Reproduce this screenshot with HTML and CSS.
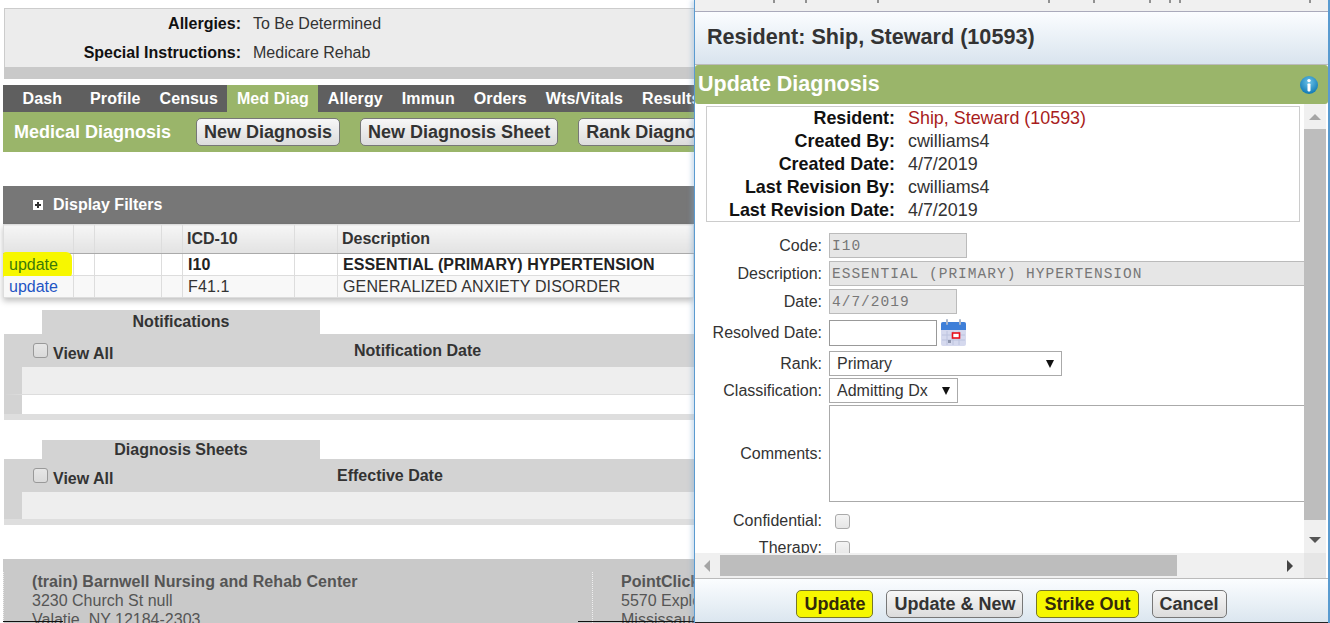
FILE: index.html
```html
<!doctype html>
<html lang="en">

<head>
  <meta charset="UTF-8" />
  <title>Medical Diagnosis</title>
  <link rel="stylesheet" href="styles.css">
</head>

<body>
  <div class="page">
    <div class="info-panel">
      <div class="info-row"><strong>Allergies:</strong><span>To Be Determined</span></div>
      <div class="info-row"><strong>Special Instructions:</strong><span>Medicare Rehab</span></div>
    </div>
    <div class="info-band"></div>

    <div class="tabs">
      <a class="tab tab-first">Dash</a>
      <a class="tab">Profile</a>
      <a class="tab">Census</a>
      <a class="tab active">Med Diag</a>
      <a class="tab">Allergy</a>
      <a class="tab">Immun</a>
      <a class="tab">Orders</a>
      <a class="tab">Wts/Vitals</a>
      <a class="tab">Results</a>
    </div>
    <div class="toolbar">
      <span class="toolbar-title">Medical Diagnosis</span>
      <button class="btn">New Diagnosis</button>
      <button class="btn">New Diagnosis Sheet</button>
      <button class="btn">Rank Diagnosis</button>
    </div>

    <div class="filters">
      <span class="plus-box"></span>
      <span>Display Filters</span>
    </div>
    <table class="diag-table">
      <colgroup>
        <col class="col-a" />
        <col class="col-b" />
        <col class="col-c" />
        <col class="col-d" />
        <col class="col-e" />
        <col class="col-f" />
        <col />
      </colgroup>
      <thead>
        <tr>
          <th></th>
          <th></th>
          <th></th>
          <th></th>
          <th>ICD-10</th>
          <th></th>
          <th>Description</th>
        </tr>
      </thead>
      <tbody>
        <tr class="strong-row">
          <td class="link-cell"><span class="marker"></span><a class="link link-marked">update</a></td>
          <td></td>
          <td></td>
          <td></td>
          <td>I10</td>
          <td></td>
          <td>ESSENTIAL (PRIMARY) HYPERTENSION</td>
        </tr>
        <tr class="alt-row">
          <td class="link-cell"><a class="link">update</a></td>
          <td></td>
          <td></td>
          <td></td>
          <td>F41.1</td>
          <td></td>
          <td>GENERALIZED ANXIETY DISORDER</td>
        </tr>
      </tbody>
    </table>

    <section class="block block-notes">
      <div class="block-tab">Notifications</div>
      <div class="block-head">
        <label class="view-all"><span class="check check-dim"></span>View All</label>
        <strong class="head-date">Notification Date</strong>
      </div>
      <div class="block-row"></div>
      <div class="block-blank"></div>
      <div class="block-foot"></div>
    </section>

    <section class="block block-sheets">
      <div class="block-tab">Diagnosis Sheets</div>
      <div class="block-head">
        <label class="view-all"><span class="check check-dim"></span>View All</label>
        <strong class="head-date head-date-sheets">Effective Date</strong>
      </div>
      <div class="block-row"></div>
      <div class="block-foot"></div>
    </section>

    <footer class="footer">
      <div class="footer-col footer-left">
        <strong>(train) Barnwell Nursing and Rehab Center</strong>
        <span>3230 Church St null</span>
        <span>Valatie, NY 12184-2303</span>
      </div>
      <div class="footer-col footer-right">
        <strong>PointClickCare</strong>
        <span>5570 Explorer Drive</span>
        <span>Mississauga</span>
      </div>
      <span class="edge-line edge-line-left"></span>
      <span class="edge-line edge-line-right"></span>
    </footer>
  </div>

  <div class="dialog">
    <div class="dialog-strip">
      <svg class="strip-ticks" width="634" height="4">
        <path d="M79 0v3M111 0v3M183 0v3M354 0v3M399 0v3M455 0v3M475 0v3M485 0v3M615 0v3" stroke="#333" fill="none" />
      </svg>
    </div>
    <div class="dialog-head">Resident: Ship, Steward (10593)</div>
    <div class="dialog-bar">
      <span>Update Diagnosis</span>
      <svg class="info-icon" width="20" height="20" viewBox="0 0 20 20">
        <defs>
          <radialGradient id="infoFill" cx="50%" cy="35%" r="65%">
            <stop offset="0" stop-color="#6cc4ea" />
            <stop offset="1" stop-color="#0f78b4" />
          </radialGradient>
        </defs>
        <circle cx="10" cy="10" r="9" fill="url(#infoFill)" />
        <circle cx="10" cy="5.6" r="1.7" fill="#fff" />
        <rect x="8.5" y="8.4" width="3" height="8" rx="0.8" fill="#fff" />
      </svg>
    </div>

    <div class="dialog-body">
      <div class="dialog-scroll">
        <div class="summary">
          <div class="summary-row"><strong>Resident:</strong><span class="resident">Ship, Steward (10593)</span></div>
          <div class="summary-row"><strong>Created By:</strong><span>cwilliams4</span></div>
          <div class="summary-row"><strong>Created Date:</strong><span>4/7/2019</span></div>
          <div class="summary-row"><strong>Last Revision By:</strong><span>cwilliams4</span></div>
          <div class="summary-row"><strong>Last Revision Date:</strong><span>4/7/2019</span></div>
        </div>

        <div class="form">
          <div class="form-row">
            <label>Code:</label>
            <input class="field field-code" disabled value="I10" />
          </div>
          <div class="form-row">
            <label>Description:</label>
            <input class="field field-desc" disabled value="ESSENTIAL (PRIMARY) HYPERTENSION" />
          </div>
          <div class="form-row">
            <label>Date:</label>
            <input class="field field-date" disabled value="4/7/2019" />
          </div>
          <div class="form-row form-row-resolved">
            <label>Resolved Date:</label>
            <input class="field field-resolved" />
            <svg class="cal-icon" width="27" height="28" viewBox="0 0 27 28">
              <rect x="1" y="3" width="25" height="24" rx="2" fill="#d5d9ee" />
              <path d="M1 5a2 2 0 0 1 2-2h21a2 2 0 0 1 2 2v6H1z" fill="#3f7fd8" />
              <rect x="6" y="0" width="2" height="6" rx="1" fill="#a9b4c8" />
              <rect x="19" y="0" width="2" height="6" rx="1" fill="#a9b4c8" />
              <path d="M2 16h23M2 21h23M7 12v14M13 12v14M19 12v14" stroke="#bcc3de" fill="none" />
              <rect x="12.5" y="14" width="7" height="5" fill="#fff" stroke="#e8101c" stroke-width="1.6" />
              <rect x="8" y="21" width="3" height="3" fill="#8e95ad" />
            </svg>
          </div>
          <div class="form-row form-row-rank">
            <label>Rank:</label>
            <div class="select select-rank"><span>Primary</span><span class="caret"></span></div>
          </div>
          <div class="form-row form-row-tight">
            <label>Classification:</label>
            <div class="select select-class"><span>Admitting Dx</span><span class="caret"></span></div>
          </div>
          <div class="form-row form-row-tight">
            <label>Comments:</label>
            <textarea class="comments"></textarea>
          </div>
          <div class="form-row form-row-check">
            <label>Confidential:</label>
            <span class="check"></span>
          </div>
          <div class="form-row form-row-check form-row-therapy">
            <label>Therapy:</label>
            <span class="check"></span>
          </div>
        </div>
      </div>

      <div class="vscroll">
        <span class="arrow arrow-up"></span>
        <div class="vthumb"></div>
        <span class="arrow arrow-down"></span>
      </div>
      <div class="hscroll">
        <span class="arrow arrow-left"></span>
        <div class="hthumb"></div>
        <span class="arrow arrow-right"></span>
      </div>
      <div class="scroll-corner"></div>
    </div>

    <div class="dialog-foot">
      <button class="btn btn-marked">Update</button>
      <button class="btn">Update &amp; New</button>
      <button class="btn btn-marked">Strike Out</button>
      <button class="btn">Cancel</button>
    </div>
  </div>
</body>

</html>
```

FILE: styles.css
```css
html,
body {
  margin: 0;
  height: 623px;
  overflow: hidden;
  background-color: #fff;
}

body {
  font-family: "Liberation Sans", Arial, sans-serif;
  font-size: 16px;
  color: #333;
}

.page {
  width: 694px;
  padding: 8px 0 0 3px;
  box-sizing: border-box;
}

/* top info panel */
.info-panel {
  margin-left: 1px;
  height: 59px;
  box-sizing: border-box;
  background-color: #ececec;
  border-top: 1px solid #ccc;
  border-left: 1px solid #ccc;
}

.info-row {
  display: flex;
  height: 29px;
  align-items: center;
}

.info-row strong {
  width: 236px;
  text-align: right;
  color: #111;
}

.info-row span {
  margin-left: 12px;
}

.info-band {
  margin-left: 1px;
  height: 12px;
  background-color: #c9c9c9;
}

/* tabs */
.tabs {
  display: flex;
  margin-top: 6px;
  height: 27px;
  background-color: #5f5f5f;
  overflow: hidden;
}

.tab {
  padding: 0 9.5px;
  line-height: 27px;
  font-weight: bold;
  letter-spacing: 0.1px;
  color: #fff;
  white-space: nowrap;
}

.tab-first {
  margin-left: 10px;
  margin-right: 9px;
}

.tab.active {
  background-color: #9ab56a;
}

.toolbar {
  display: flex;
  align-items: center;
  height: 40px;
  background-color: #9ab56a;
  overflow: hidden;
}

.toolbar-title {
  margin-left: 11px;
  margin-right: 25px;
  font-size: 18px;
  font-weight: bold;
  color: #fff;
  white-space: nowrap;
}

.btn {
  flex: none;
  height: 28px;
  padding: 0 7px;
  border: 1px solid #777;
  border-radius: 5px;
  background: linear-gradient(#f7f7f7, #dcdcdc);
  font-family: inherit;
  font-size: 18px;
  font-weight: bold;
  color: #333;
}

.toolbar .btn {
  margin-right: 20px;
}

/* filters and table */
.filters {
  display: flex;
  align-items: center;
  gap: 10px;
  margin-top: 34px;
  height: 38px;
  padding-left: 30px;
  background-color: #777;
  font-weight: bold;
  color: #fff;
}

.plus-box {
  position: relative;
  width: 10px;
  height: 10px;
  background-color: #fff;
}

.plus-box::before {
  content: "";
  position: absolute;
  left: 2px;
  top: 4px;
  width: 6px;
  height: 2px;
  background-color: #333;
}

.plus-box::after {
  content: "";
  position: absolute;
  left: 4px;
  top: 2px;
  width: 2px;
  height: 6px;
  background-color: #333;
}

.diag-table {
  width: 691px;
  table-layout: fixed;
  border-collapse: collapse;
  box-shadow: 0 3px 6px rgba(0, 0, 0, 0.25);
}

.col-a {
  width: 70px;
}

.col-b {
  width: 21px;
}

.col-c {
  width: 67px;
}

.col-d {
  width: 21px;
}

.col-e {
  width: 112px;
}

.col-f {
  width: 43px;
}

.diag-table th,
.diag-table td {
  padding: 0 0 0 4px;
  border: 1px solid #ddd;
  text-align: left;
  white-space: nowrap;
  overflow: hidden;
}

.diag-table th {
  height: 28px;
  background: linear-gradient(#f6f6f6, #e2e2e2);
  border-bottom: 1px solid #aaa;
  font-weight: bold;
}

.diag-table td {
  height: 21px;
  padding-left: 5px;
}

.strong-row td {
  font-weight: bold;
  color: #222;
  letter-spacing: 0.1px;
}

.alt-row td {
  background-color: #f8f8f8;
  letter-spacing: 0.14px;
}

.diag-table .link-cell {
  position: relative;
  overflow: visible;
  font-weight: normal;
  letter-spacing: 0;
}

.link {
  position: relative;
  color: #1f55c4;
}

.link-marked {
  color: #3c7a08;
}

.marker {
  position: absolute;
  left: -1px;
  top: -2px;
  width: 69px;
  height: 26px;
  background-color: #f7f700;
  border-radius: 3px 6px 5px 3px;
}

/* notification blocks */
.block {
  position: relative;
  margin-left: 1px;
}

.block-notes {
  margin-top: 12px;
}

.block-sheets {
  margin-top: 20px;
}

.block-tab {
  margin-left: 38px;
  width: 278px;
  height: 24px;
  background-color: #d3d3d3;
  font-weight: bold;
  line-height: 23px;
  text-align: center;
}

.block-sheets .block-tab {
  height: 19px;
  line-height: 19px;
}

.block-head {
  position: relative;
  height: 33px;
  background-color: #d3d3d3;
}

.view-all {
  position: absolute;
  left: 29px;
  top: 9px;
  display: flex;
  align-items: flex-start;
  gap: 5px;
  font-weight: bold;
  line-height: 22px;
}

.head-date {
  position: absolute;
  left: 350px;
  top: 8px;
}

.head-date-sheets {
  left: 333px;
}

.block-row {
  height: 27px;
  border-left: 18px solid #d3d3d3;
  background-color: #eee;
}

.block-blank {
  height: 19px;
  border-top: 1px solid #ddd;
  border-left: 18px solid #d3d3d3;
  background-color: #fff;
}

.block-foot {
  height: 6px;
  background-color: #dedede;
}

/* checkbox */
.check {
  display: inline-block;
  flex: none;
  width: 13px;
  height: 13px;
  border: 1px solid #aaa;
  border-radius: 3px;
  background: linear-gradient(#f4f4f4, #e6e6e6);
}

.check-dim {
  border-color: #999;
  background: linear-gradient(#e6e6e6, #dadada);
}

/* footer */
.footer {
  position: relative;
  display: flex;
  margin-top: 34px;
  height: 64px;
  padding-top: 13px;
  box-sizing: border-box;
  background-color: #c9c9c9;
  color: #555;
  overflow: hidden;
}

.footer-col {
  display: flex;
  flex: none;
  flex-direction: column;
  line-height: 19px;
  white-space: nowrap;
}

.footer-left {
  width: 589px;
  padding-left: 28px;
  box-sizing: border-box;
  border-left: 1px dotted #eee;
}

.footer-left strong {
  letter-spacing: 0.07px;
}

.footer-right {
  padding-left: 28px;
  border-left: 1px dotted #eee;
}

.edge-line {
  position: absolute;
  bottom: 1px;
  height: 1px;
  background-color: #111;
}

.edge-line-left {
  left: 0;
  width: 60px;
}

.edge-line-right {
  left: 575px;
  width: 116px;
}

/* dialog */
.dialog {
  position: absolute;
  left: 694px;
  top: 0;
  width: 636px;
  height: 623px;
  box-sizing: border-box;
  display: flex;
  flex-direction: column;
  background-color: #fff;
  border-left: 1px solid #5a9bd0;
  border-right: 2px solid #5a9bd0;
  box-shadow: -3px 0 4px rgba(130, 170, 210, 0.35);
}

.dialog-strip {
  height: 11px;
  background-color: #f0f0f0;
  border-bottom: 1px solid #aab;
}

.strip-ticks {
  display: block;
}

.dialog-head {
  height: 53px;
  padding-left: 12px;
  box-sizing: border-box;
  background: linear-gradient(#fbfdff, #d9e4ee);
  border-bottom: 1px solid #bbb;
  font-size: 21.6px;
  font-weight: bold;
  line-height: 49px;
  color: #333;
}

.dialog-bar {
  display: flex;
  align-items: center;
  justify-content: space-between;
  height: 39px;
  padding: 0 9px 0 3px;
  background-color: #9ab56a;
  border-radius: 3px;
  font-size: 21.5px;
  font-weight: bold;
  line-height: 37px;
  color: #fff;
}

.dialog-body {
  display: grid;
  grid-template-columns: 609px 24px;
  grid-template-rows: 449px 25px;
  flex: none;
  height: 474px;
}

.dialog-scroll {
  overflow: hidden;
}

.summary {
  margin: 2px 4px 0 11px;
  height: 116px;
  box-sizing: border-box;
  border: 1px solid #ccc;
  font-size: 17.9px;
}

.summary-row {
  display: flex;
  height: 23px;
  align-items: center;
}

.summary-row strong {
  width: 188px;
  text-align: right;
  color: #111;
  white-space: nowrap;
}

.summary-row span {
  margin-left: 13px;
}

.resident {
  color: #a81c20;
}

.form {
  margin-top: 11px;
}

.form-row {
  display: flex;
  align-items: center;
  gap: 7px;
  margin-top: 3px;
  white-space: nowrap;
}

.form-row:first-child {
  margin-top: 0;
}

.form-row label {
  flex: none;
  width: 127px;
  text-align: right;
}

.form-row-resolved {
  margin-top: 6px;
}

.form-row-rank {
  margin-top: 5px;
}

.form-row-tight {
  margin-top: 2px;
}

.form-row-check {
  margin-top: 10px;
}

.form-row-check .check {
  margin-left: 6px;
}

.form-row-therapy {
  margin-top: 9px;
}

.field {
  flex: none;
  height: 25px;
  padding: 0 2px;
  box-sizing: border-box;
  border: 1px solid #bbb;
  border-radius: 0;
  background-color: #e6e6e6;
  font-family: "Liberation Mono", "Courier New", monospace;
  font-size: 14.5px;
  letter-spacing: 1px;
  color: #777;
}

.field-code {
  width: 138px;
}

.field-desc {
  width: 480px;
}

.field-date {
  width: 128px;
}

.field-resolved {
  width: 108px;
  height: 26px;
  background-color: #fff;
  border-color: #999;
}

.cal-icon {
  flex: none;
  margin: -1px 0 -1px -4px;
}

.select {
  display: flex;
  align-items: center;
  justify-content: space-between;
  flex: none;
  height: 25px;
  padding: 0 7px;
  box-sizing: border-box;
  border: 1px solid #aaa;
  background-color: #fff;
}

.select-rank {
  width: 233px;
}

.select-class {
  width: 129px;
}

.caret {
  width: 0;
  height: 0;
  border-top: 8px solid #111;
  border-left: 4.5px solid transparent;
  border-right: 4.5px solid transparent;
}

.comments {
  flex: none;
  display: block;
  width: 480px;
  height: 97px;
  box-sizing: border-box;
  border: 1px solid #aaa;
  border-radius: 0;
  resize: none;
  outline: none;
}

/* fake scrollbars */
.vscroll {
  display: flex;
  flex-direction: column;
  align-items: center;
  width: 22px;
  background-color: #f0f0f0;
}

.vthumb {
  width: 22px;
  height: 391px;
  margin: 9px 0 17px;
  background-color: #bdbdbd;
}

.hscroll {
  display: flex;
  align-items: center;
  background-color: #f0f0f0;
}

.hthumb {
  width: 457px;
  height: 21px;
  margin-left: 10px;
  background-color: #bdbdbd;
}

.scroll-corner {
  width: 22px;
  background-color: #e6e6e6;
}

.arrow {
  flex: none;
  width: 0;
  height: 0;
}

.arrow-up {
  margin-top: 10px;
  border-bottom: 6px solid #a5a5a5;
  border-left: 6px solid transparent;
  border-right: 6px solid transparent;
}

.arrow-down {
  border-top: 6px solid #555;
  border-left: 6px solid transparent;
  border-right: 6px solid transparent;
}

.arrow-left {
  margin-left: 9px;
  border-right: 6px solid #a5a5a5;
  border-top: 6px solid transparent;
  border-bottom: 6px solid transparent;
}

.arrow-right {
  margin-left: 110px;
  border-left: 6px solid #444;
  border-top: 6px solid transparent;
  border-bottom: 6px solid transparent;
}

.dialog-foot {
  display: flex;
  justify-content: center;
  align-items: center;
  gap: 13px;
  flex: 1;
  padding-top: 7px;
  box-sizing: border-box;
  background: linear-gradient(#fbfdff, #dbe6ef);
  border-top: 1px solid #bbb;
  border-bottom: 1px solid #222;
}

.btn-marked {
  background: #f6f700;
  border-color: #77772a;
  color: #33290a;
}
```
